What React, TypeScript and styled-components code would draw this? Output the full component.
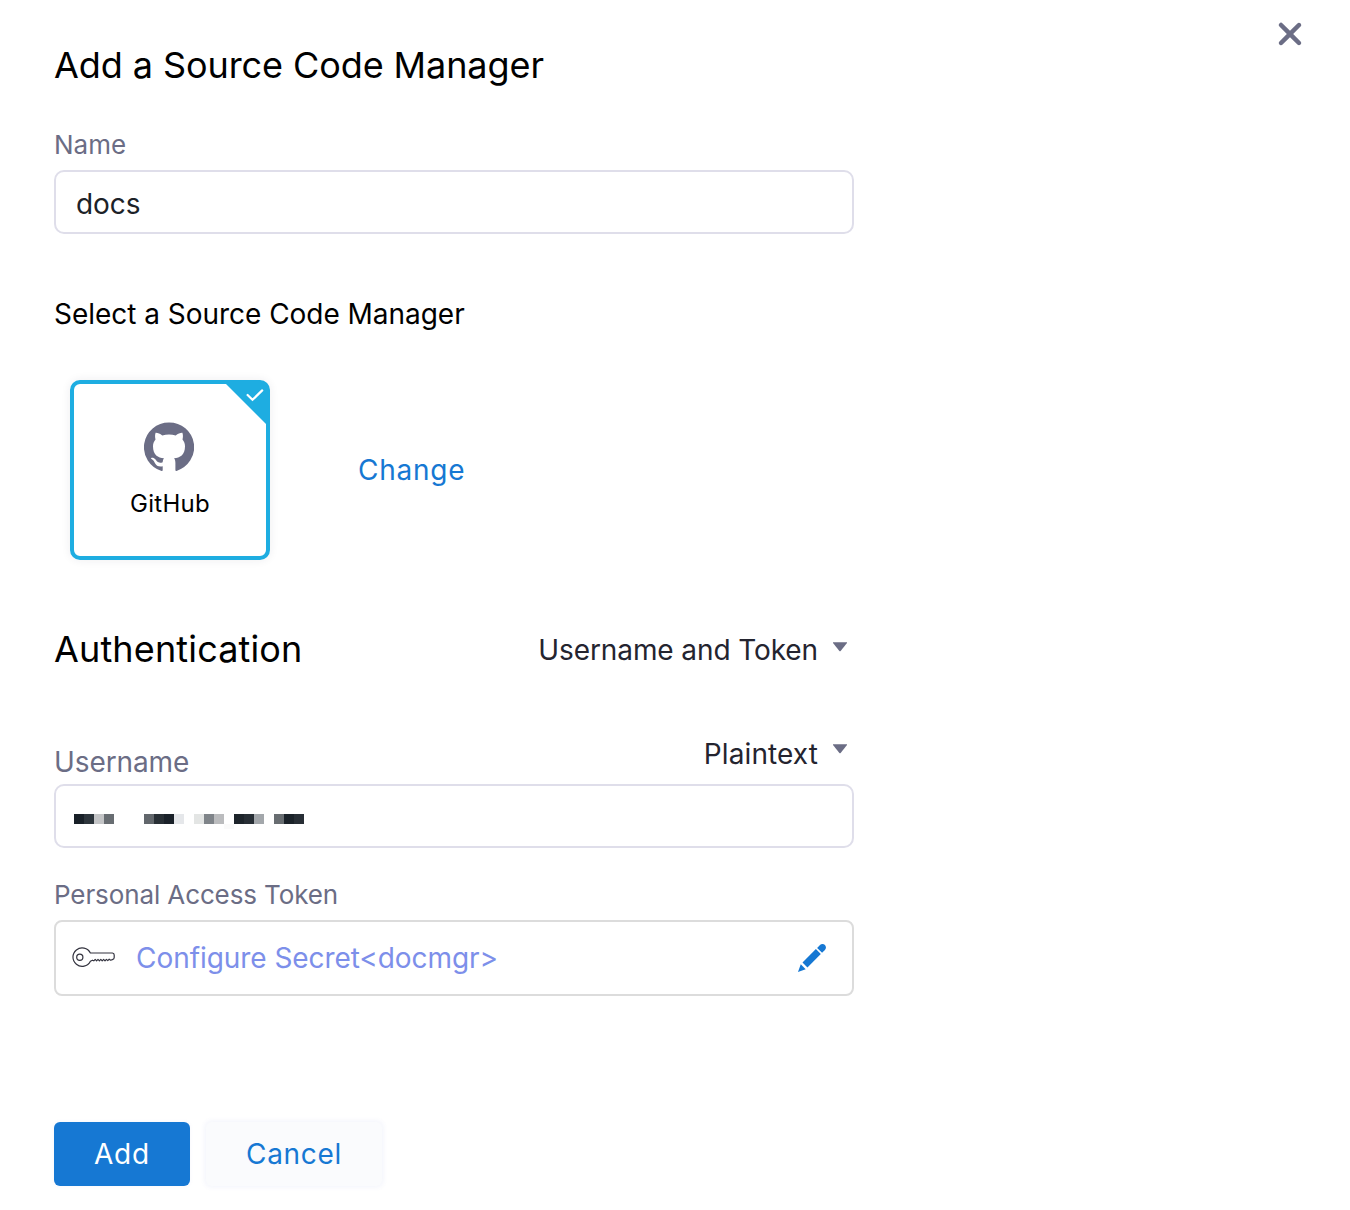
import React from "react";
import styled, { createGlobalStyle } from "styled-components";

const GlobalStyle = createGlobalStyle`
  * { box-sizing: border-box; }
  body {
    margin: 0;
    background: #ffffff;
    font-family: Inter, "Liberation Sans", sans-serif;
    color: #000000;
  }
`;

const Dialog = styled.main`
  display: flex;
  justify-content: space-between;
  align-items: flex-start;
  width: 1350px;
  height: 1210px;
  padding: 0 42px 0 54px;
  overflow: hidden;
`;

const Form = styled.form`
  display: flex;
  flex-direction: column;
  width: 800px;
  padding-top: 41px;
`;

const CloseButton = styled.button`
  display: flex;
  margin: 16px 0 0;
  padding: 0;
  border: 0;
  background: none;
  color: #6b6d85;
`;

const Title = styled.h1<{ $spacing: number }>`
  margin: 0;
  font-size: 36px;
  font-weight: 400;
  line-height: 48px;
  letter-spacing: ${(p) => p.$spacing}px;
  white-space: nowrap;
`;

const Label = styled.label<{ $size: number; $spacing: number }>`
  font-size: ${(p) => p.$size}px;
  line-height: 32px;
  letter-spacing: ${(p) => p.$spacing}px;
  color: #6b6d85;
  white-space: nowrap;
`;

const Field = styled.div`
  display: flex;
  flex-direction: column;
  gap: 9px;
  margin-top: 40px;
`;

const TextInput = styled.input`
  width: 100%;
  height: 64px;
  padding: 4px 20px 0;
  border: 2px solid #dfdeea;
  border-radius: 10px;
  outline: none;
  background: #ffffff;
  font: 400 28px Inter, "Liberation Sans", sans-serif;
  letter-spacing: -0.1px;
  color: #1c2228;
`;

const SectionLabel = styled.p`
  margin: 64px 0 0;
  font-size: 28px;
  line-height: 32px;
  letter-spacing: -0.03px;
`;

const Picker = styled.div`
  display: flex;
  align-items: center;
  gap: 88px;
  margin: 50px 0 0 16px;
`;

const ProviderCard = styled.div`
  position: relative;
  display: flex;
  flex-direction: column;
  align-items: center;
  gap: 16px;
  width: 200px;
  height: 180px;
  padding-top: 38px;
  border: 4px solid #1eade1;
  border-radius: 10px;
  box-shadow: 0 0 10px rgba(40, 41, 61, 0.08);
`;

const ProviderIcon = styled.svg`
  display: block;
  width: 50px;
  height: 50px;
  margin-right: 2px;
  fill: #6b6d85;
`;

const ProviderName = styled.span`
  font-size: 24px;
  line-height: 32px;
  letter-spacing: 0.3px;
`;

const SelectedCorner = styled.svg`
  position: absolute;
  top: -1px;
  right: -1px;
  width: 42px;
  height: 42px;
`;

const LinkButton = styled.button`
  padding: 0;
  border: 0;
  background: none;
  font: 400 28px/36px Inter, "Liberation Sans", sans-serif;
  letter-spacing: 0.75px;
  color: #1678d3;
`;

const AuthHeader = styled.div`
  display: flex;
  justify-content: space-between;
  align-items: center;
  margin-top: 65px;
`;

const Dropdown = styled.div<{ $lift: number }>`
  display: flex;
  align-items: flex-start;
  height: 36px;
  gap: 8px;
  font-size: 28px;
  line-height: 36px;
  color: #24242f;
  white-space: nowrap;

  ${AuthHeader} & {
    margin-top: 2px;
  }

  svg {
    margin-top: ${(p) => p.$lift}px;
    color: #6b6d85;
  }
`;

const DropdownText = styled.span<{ $spacing: number }>`
  letter-spacing: ${(p) => p.$spacing}px;
`;

const UserHeader = styled.div`
  display: flex;
  justify-content: space-between;
  align-items: flex-end;
  height: 42px;
  margin-top: 63px;

  ${Dropdown} {
    align-self: flex-start;
  }
`;

const MaskedInput = styled.div`
  display: flex;
  height: 64px;
  margin-top: 6px;
  padding: 28px 18px 0;
  border: 2px solid #dfdeea;
  border-radius: 10px;
`;

const Mosaic = styled.div`
  display: grid;
  grid-template-columns: repeat(23, 10px);
  grid-template-rows: 10px 5px;
`;

const Tile = styled.i<{ $color: string }>`
  background: ${(p) => p.$color};
`;

const TokenLabel = styled(Label)`
  margin-top: 31px;
`;

const SecretBox = styled.div`
  display: flex;
  align-items: center;
  height: 76px;
  margin-top: 9px;
  padding: 0 24px 0 16px;
  border: 2px solid #dcdcdc;
  border-radius: 8px;
`;

const KeyIcon = styled.svg`
  width: 44px;
  height: 22px;
  margin-top: -2px;
`;

const SecretName = styled.span`
  flex: 1;
  margin-left: 20px;
  font-size: 28px;
  line-height: 36px;
  letter-spacing: -0.05px;
  color: #7d8fea;
`;

const Actions = styled.div`
  display: flex;
  gap: 16px;
  margin-top: 126px;
`;

const Button = styled.button<{ $primary?: boolean; $width: number }>`
  width: ${(p) => p.$width}px;
  height: 64px;
  padding: 0;
  border: 0;
  border-radius: 6px;
  background: ${(p) => (p.$primary ? "#1678d3" : "#fafbfd")};
  color: ${(p) => (p.$primary ? "#ffffff" : "#1678d3")};
  box-shadow: 0 0 ${(p) => (p.$primary ? "4px" : "4px 2px")} rgba(90, 100, 200, 0.06);
  font: 400 28px Inter, "Liberation Sans", sans-serif;
  letter-spacing: ${(p) => (p.$primary ? 0.85 : 0.7)}px;
`;

const Glyph = ({ size, color, d }: { size: number; color?: string; d: string }) => (
  <svg width={size} height={size} viewBox="0 0 16 16" fill={color ?? "currentColor"}>
    <path d={d} fillRule="evenodd" />
  </svg>
);

const CROSS =
  "M9.41 8l3.29-3.29c.19-.18.3-.43.3-.71a1.003 1.003 0 00-1.71-.71L8 6.59l-3.29-3.3a1.003 1.003 0 00-1.42 1.42L6.59 8 3.3 11.29c-.19.18-.3.43-.3.71a1.003 1.003 0 001.71.71L8 9.41l3.29 3.29c.18.19.43.3.71.3a1.003 1.003 0 00.71-1.71L9.41 8z";
const CARET = "M4 5.9H12V6.3L8.35 10.8Q8 11.1 7.65 10.8L4 6.3Z";
const EDIT =
  "M3.25 10.26l2.47 2.47 6.69-6.69-2.46-2.48-6.7 6.7zM.99 14.99l3.86-1.39-2.46-2.44L.99 14.99zm12.25-14c-.48 0-.92.2-1.24.51l-1.44 1.44 2.47 2.47 1.44-1.44c.32-.32.51-.75.51-1.24.01-.95-.77-1.74-1.74-1.74z";
const GITHUB =
  "M25 .4A25 24.8 0 0 0 17.6 48.9Q18.7 49.2 18.7 48V44.3C14.5 45 12.3 43.6 11 41.2C9.8 38.8 8.8 37.8 7 36.6C6.6 35.6 8.5 35.4 10 36.2C11.5 37 12.2 38.5 13.2 39.6C14.6 41 16.8 41 18.7 40.2C18.8 38.6 19.2 37.2 20 36.3C14 35.7 9 33 9 24.2C9 21.4 10 19.2 11.5 17.4C11 15.5 10.8 13 11.6 10.8C13.5 10.6 16 11.9 18.3 13.4C22.5 12.2 27.5 12.2 31.7 13.4C34 11.9 36.5 10.6 38.4 10.8C39.2 13 39 15.5 38.5 17.4C40 19.2 41 21.4 41 24.2C41 33 36 35.7 30 36.3C31 37.3 31.4 38.9 31.4 41V48Q31.4 49.2 32.5 48.9A25 24.8 0 0 0 25 .4Z";

const N = "transparent";
const TILES = [
  "#182028", "#2d353c", "#c3c4c6", "#686d72", N, N, N,
  "#62676c", "#282f35", "#1a2129", "#e5e7ea", N,
  "#e3e5e4", "#7f8489", "#bbbcbe", N,
  "#1d242b", "#272e35", "#a3a7ab", N,
  "#686d71", "#1a2229", "#272e35",
  N, N, N, N, N, N, N, N, N, N, N, N, N, N, N, "#fafafa",
];

export default function App() {
  return (
    <>
      <GlobalStyle />
      <Dialog>
        <Form onSubmit={(e) => e.preventDefault()}>
          <Title $spacing={-0.08}>Add a Source Code Manager</Title>
          <Field>
            <Label $size={26} $spacing={0}>Name</Label>
            <TextInput defaultValue="docs" />
          </Field>

          <SectionLabel>Select a Source Code Manager</SectionLabel>
          <Picker>
            <ProviderCard>
              <SelectedCorner viewBox="0 0 42 42">
                <path d="M0 0H42V42Z" fill="#1eade1" />
                <path
                  d="M22.6 12L27.5 16.8L37.2 7.4"
                  fill="none"
                  stroke="#ffffff"
                  strokeWidth="2.2"
                  strokeLinecap="round"
                />
              </SelectedCorner>
              <ProviderIcon viewBox="0 0 50 50">
                <path d={GITHUB} />
              </ProviderIcon>
              <ProviderName>GitHub</ProviderName>
            </ProviderCard>
            <LinkButton type="button">Change</LinkButton>
          </Picker>

          <AuthHeader>
            <Title as="h2" $spacing={0.15}>Authentication</Title>
            <Dropdown $lift={0}>
              <DropdownText $spacing={-0.1}>Username and Token</DropdownText>
              <Glyph size={28} d={CARET} />
            </Dropdown>
          </AuthHeader>

          <UserHeader>
            <Label $size={28} $spacing={-0.1}>Username</Label>
            <Dropdown $lift={-2}>
              <DropdownText $spacing={0.1}>Plaintext</DropdownText>
              <Glyph size={28} d={CARET} />
            </Dropdown>
          </UserHeader>
          <MaskedInput>
            <Mosaic>
              {TILES.map((color, i) => (
                <Tile key={i} $color={color} />
              ))}
            </Mosaic>
          </MaskedInput>

          <TokenLabel $size={26} $spacing={-0.11}>Personal Access Token</TokenLabel>
          <SecretBox>
            <KeyIcon viewBox="0 0 44 22" fill="none" stroke="#33333f" strokeWidth="1.2">
              <path
                d="M18.4 7H40.4Q42.2 7.2 42.2 9V11.4Q42.2 13.2 40.4 13.6L38.6 14.2L37.2 13.2L35.8 14.6L34.4 13.4L33 14.8L31.6 13.4L30.2 14.8L28.8 13.4L27.4 14.8L26 13.4L24.6 14.8L23.2 13.4L21.8 14.8L20.4 14.2L18.4 15.2A9.2 9.2 0 1 1 18.4 7Z"
                strokeLinejoin="round"
              />
              <circle cx="7.8" cy="11.2" r="3.1" />
            </KeyIcon>
            <SecretName>Configure Secret&lt;docmgr&gt;</SecretName>
            <Glyph size={32} color="#1678d3" d={EDIT} />
          </SecretBox>

          <Actions>
            <Button $primary $width={136}>Add</Button>
            <Button $width={176} type="button">Cancel</Button>
          </Actions>
        </Form>
        <CloseButton type="button" aria-label="Close">
          <Glyph size={36} d={CROSS} />
        </CloseButton>
      </Dialog>
    </>
  );
}
